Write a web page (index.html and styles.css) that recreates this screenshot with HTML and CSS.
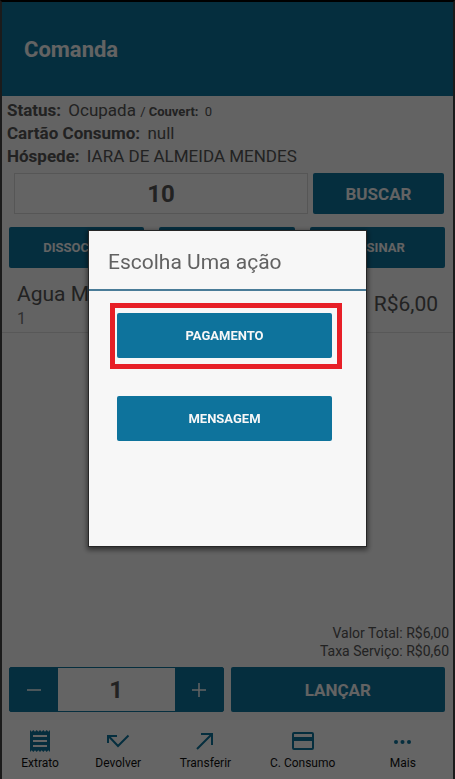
FILE: index.html
```html
<!DOCTYPE html>
<html lang="pt-BR">
<head>
<meta charset="utf-8">
<meta name="viewport" content="width=device-width, initial-scale=1">
<title>Comanda</title>
<link rel="stylesheet" href="styles.css">
</head>
<body>
<div class="screen">
  <header class="topbar"><h1>Comanda</h1></header>
  <main class="content">
    <section class="info">
      <p><b>Status:</b> <span>Ocupada</span> <small>/ <b>Couvert:</b> <span>0</span></small></p>
      <p><b>Cartão Consumo:</b> <span>null</span></p>
      <p><b>Hóspede:</b> <span>IARA DE ALMEIDA MENDES</span></p>
    </section>
    <form class="search">
      <input class="field" type="text" value="10" aria-label="Número da comanda">
      <button class="btn btn-large" type="button">BUSCAR</button>
    </form>
    <div class="actions">
      <button class="btn" type="button">DISSOCIAR</button>
      <button class="btn" type="button" aria-label="Agrupar"></button>
      <button class="btn" type="button">ASSINAR</button>
    </div>
    <ul class="items">
      <li class="item">
        <div class="item-text"><span class="item-name">Agua Mineral</span><span class="item-qty">1</span></div>
        <span class="item-price">R$6,00</span>
      </li>
    </ul>
    <div class="totals">
      <p>Valor Total: <span>R$6,00</span></p>
      <p>Taxa Serviço: <span>R$0,60</span></p>
    </div>
    <div class="launch">
      <div class="stepper">
        <button class="step" type="button" aria-label="Diminuir"><svg width="14" height="14" viewBox="0 0 14 14"><path d="M0 7h14"/></svg></button>
        <input class="count" type="text" value="1" aria-label="Quantidade">
        <button class="step" type="button" aria-label="Aumentar"><svg width="14" height="14" viewBox="0 0 14 14"><path d="M0 7h14M7 0v14"/></svg></button>
      </div>
      <button class="btn btn-large" type="button">LANÇAR</button>
    </div>
  </main>
  <nav class="tabs">
    <a class="tab" href="#extrato">
      <svg width="24" height="24" viewBox="0 0 24 24"><path fill="currentColor" fill-rule="evenodd" d="M2 1l1.7 1.7L5.300 1 7 2.700 8.700 1l1.600 1.700L12 1l1.700 1.700L15.300 1 17 2.700 18.700 1l1.600 1.700L22 1v22l-1.700-1.700L18.700 23 17 21.300 15.300 23l-1.600-1.700L12 23l-1.700-1.700L8.700 23 7 21.300 5.300 23l-1.600-1.700L2 23zM5 6v2h14V6zm0 5v2h14v-2zm0 5v2h14v-2z"/></svg>
      <span>Extrato</span>
    </a>
    <a class="tab" href="#devolver">
      <svg width="24" height="24" viewBox="0 0 24 24"><path class="line" d="M2 14V7h9M2.500 7L12 17 22.500 6.500"/></svg>
      <span>Devolver</span>
    </a>
    <a class="tab" href="#transferir">
      <svg width="24" height="24" viewBox="0 0 24 24"><path class="line" d="M4 20L19 5M8 5h11v11"/></svg>
      <span>Transferir</span>
    </a>
    <a class="tab" href="#consumo">
      <svg width="24" height="24" viewBox="0 0 24 24"><path fill="currentColor" fill-rule="evenodd" d="M3 3h18a2 2 0 0 1 2 2v14a2 2 0 0 1-2 2H3a2 2 0 0 1-2-2V5a2 2 0 0 1 2-2zM3 5v3h18V5zm0 7v7h18v-7z"/></svg>
      <span>C. Consumo</span>
    </a>
    <a class="tab" href="#mais">
      <svg width="24" height="24" viewBox="0 0 24 24"><g fill="currentColor"><circle cx="5" cy="13" r="2"/><circle cx="11.500" cy="13" r="2"/><circle cx="18" cy="13" r="2"/></g></svg>
      <span>Mais</span>
    </a>
  </nav>
</div>
<div class="overlay">
  <div class="dialog" role="dialog" aria-labelledby="dialog-title">
    <h2 id="dialog-title">Escolha Uma ação</h2>
    <div class="dialog-body">
      <div class="highlight"><button class="btn" type="button">PAGAMENTO</button></div>
      <button class="btn" type="button">MENSAGEM</button>
    </div>
  </div>
</div>
</body>
</html>
```

FILE: styles.css
```css
* { box-sizing: border-box; }

body {
  margin: 0;
  background: #000;
  color: #555;
  font-family: Roboto, "Liberation Sans", sans-serif;
}

p, h1, h2, ul { margin: 0; padding: 0; }
button, input { font-family: inherit; margin: 0; }

.screen {
  display: flex;
  flex-direction: column;
  min-height: 100vh;
  border: 2px solid #444;
  border-top-color: #000;
  border-bottom: 0;
  background: #f7f7f7;
}

.topbar {
  display: flex;
  align-items: center;
  height: 94px;
  padding: 0 22px;
  background: #0e739c;
  color: #f7f7f7;
}
.topbar h1 { font-size: 22px; font-weight: 700; }

.content {
  flex: 1;
  display: flex;
  flex-direction: column;
}

.info {
  padding: 3px 5px 0;
  font-size: 17px;
  line-height: 23px;
}
.info p { height: 23px; }
.info span { margin-left: 3px; }
.info small { font-size: 13px; }

.btn {
  padding: 0;
  border: 0;
  border-radius: 2px;
  background: #0e739c;
  color: #f7f7f7;
  font-size: 13px;
  font-weight: 700;
}
.btn-large { font-size: 17px; }

.search {
  display: grid;
  grid-template-columns: 294fr 131fr;
  gap: 5px;
  height: 41px;
  margin: 5px 9px 0 12px;
}
.field, .count {
  width: 100%;
  min-width: 0;
  padding: 0;
  background: #f9f9f9;
  color: #555;
  font-size: 24px;
  font-weight: 700;
  text-align: center;
}
.field { border: 1px solid #d8d8d8; }

.actions {
  display: grid;
  grid-template-columns: repeat(3, 1fr);
  gap: 15px;
  height: 41px;
  margin: 13px 8px 0 7px;
}

.items { list-style: none; }
.item {
  display: flex;
  justify-content: space-between;
  align-items: center;
  padding: 11px 15px 3px;
  border-bottom: 1px solid #dcdcdc;
}
.item-text { display: flex; flex-direction: column; }
.item-name { font-size: 21px; line-height: 30px; }
.item-qty { font-size: 16px; line-height: 20px; color: #777; }
.item-price { font-size: 21px; }

.totals {
  margin-top: auto;
  padding: 0 4px 7px;
  font-size: 14px;
  line-height: 18px;
  text-align: right;
}

.launch {
  display: grid;
  grid-template-columns: 1fr 1fr;
  gap: 7px;
  height: 45px;
  margin: 0 8px 8px 7px;
}
.stepper {
  display: grid;
  grid-template-columns: 48px 1fr 48px;
  border: 1px solid #0e739c;
  border-radius: 2px;
  background: #0e739c;
}
.step {
  display: grid;
  place-items: center;
  padding: 0;
  border: 0;
  background: none;
  color: #f7f7f7;
}
.step path { stroke: currentColor; stroke-width: 1.5; }
.count { border: 0; }

.tabs {
  display: grid;
  grid-template-columns: 76fr 80fr 94fr 100fr 100fr;
  height: 59px;
  padding-top: 9px;
  background: #fcfcfc;
}
.tab {
  display: flex;
  flex-direction: column;
  align-items: center;
  gap: 3px;
  color: #0e739c;
  font-size: 12px;
  line-height: 14px;
  text-decoration: none;
}
.tab span { color: #111; }
.line { fill: none; stroke: currentColor; stroke-width: 2; }

.overlay {
  position: fixed;
  inset: 0;
  display: grid;
  place-items: center;
  padding-bottom: 2px;
  background: rgba(0, 0, 0, 0.6);
}
.dialog {
  width: 62%;
  max-width: 279px;
  min-width: 260px;
  padding-bottom: 105px;
  border: 1px solid #262626;
  background: #f7f7f7;
  box-shadow: 0 2px 5px 1px rgba(0, 0, 0, 0.5);
}
.dialog h2 {
  padding: 4px 19px 0;
  border-bottom: 2px solid #4a7c98;
  color: #626262;
  font-size: 21px;
  font-weight: 400;
  line-height: 54px;
}
.dialog-body {
  display: flex;
  flex-direction: column;
  padding: 12px 24px 0 21px;
}
.dialog-body .btn {
  width: 100%;
  height: 45px;
}
.highlight {
  padding: 5px 5px 6px 2px;
  border: 5px solid #e71f27;
}
.dialog-body > .btn {
  width: auto;
  margin: 27px 10px 0 7px;
}
```
